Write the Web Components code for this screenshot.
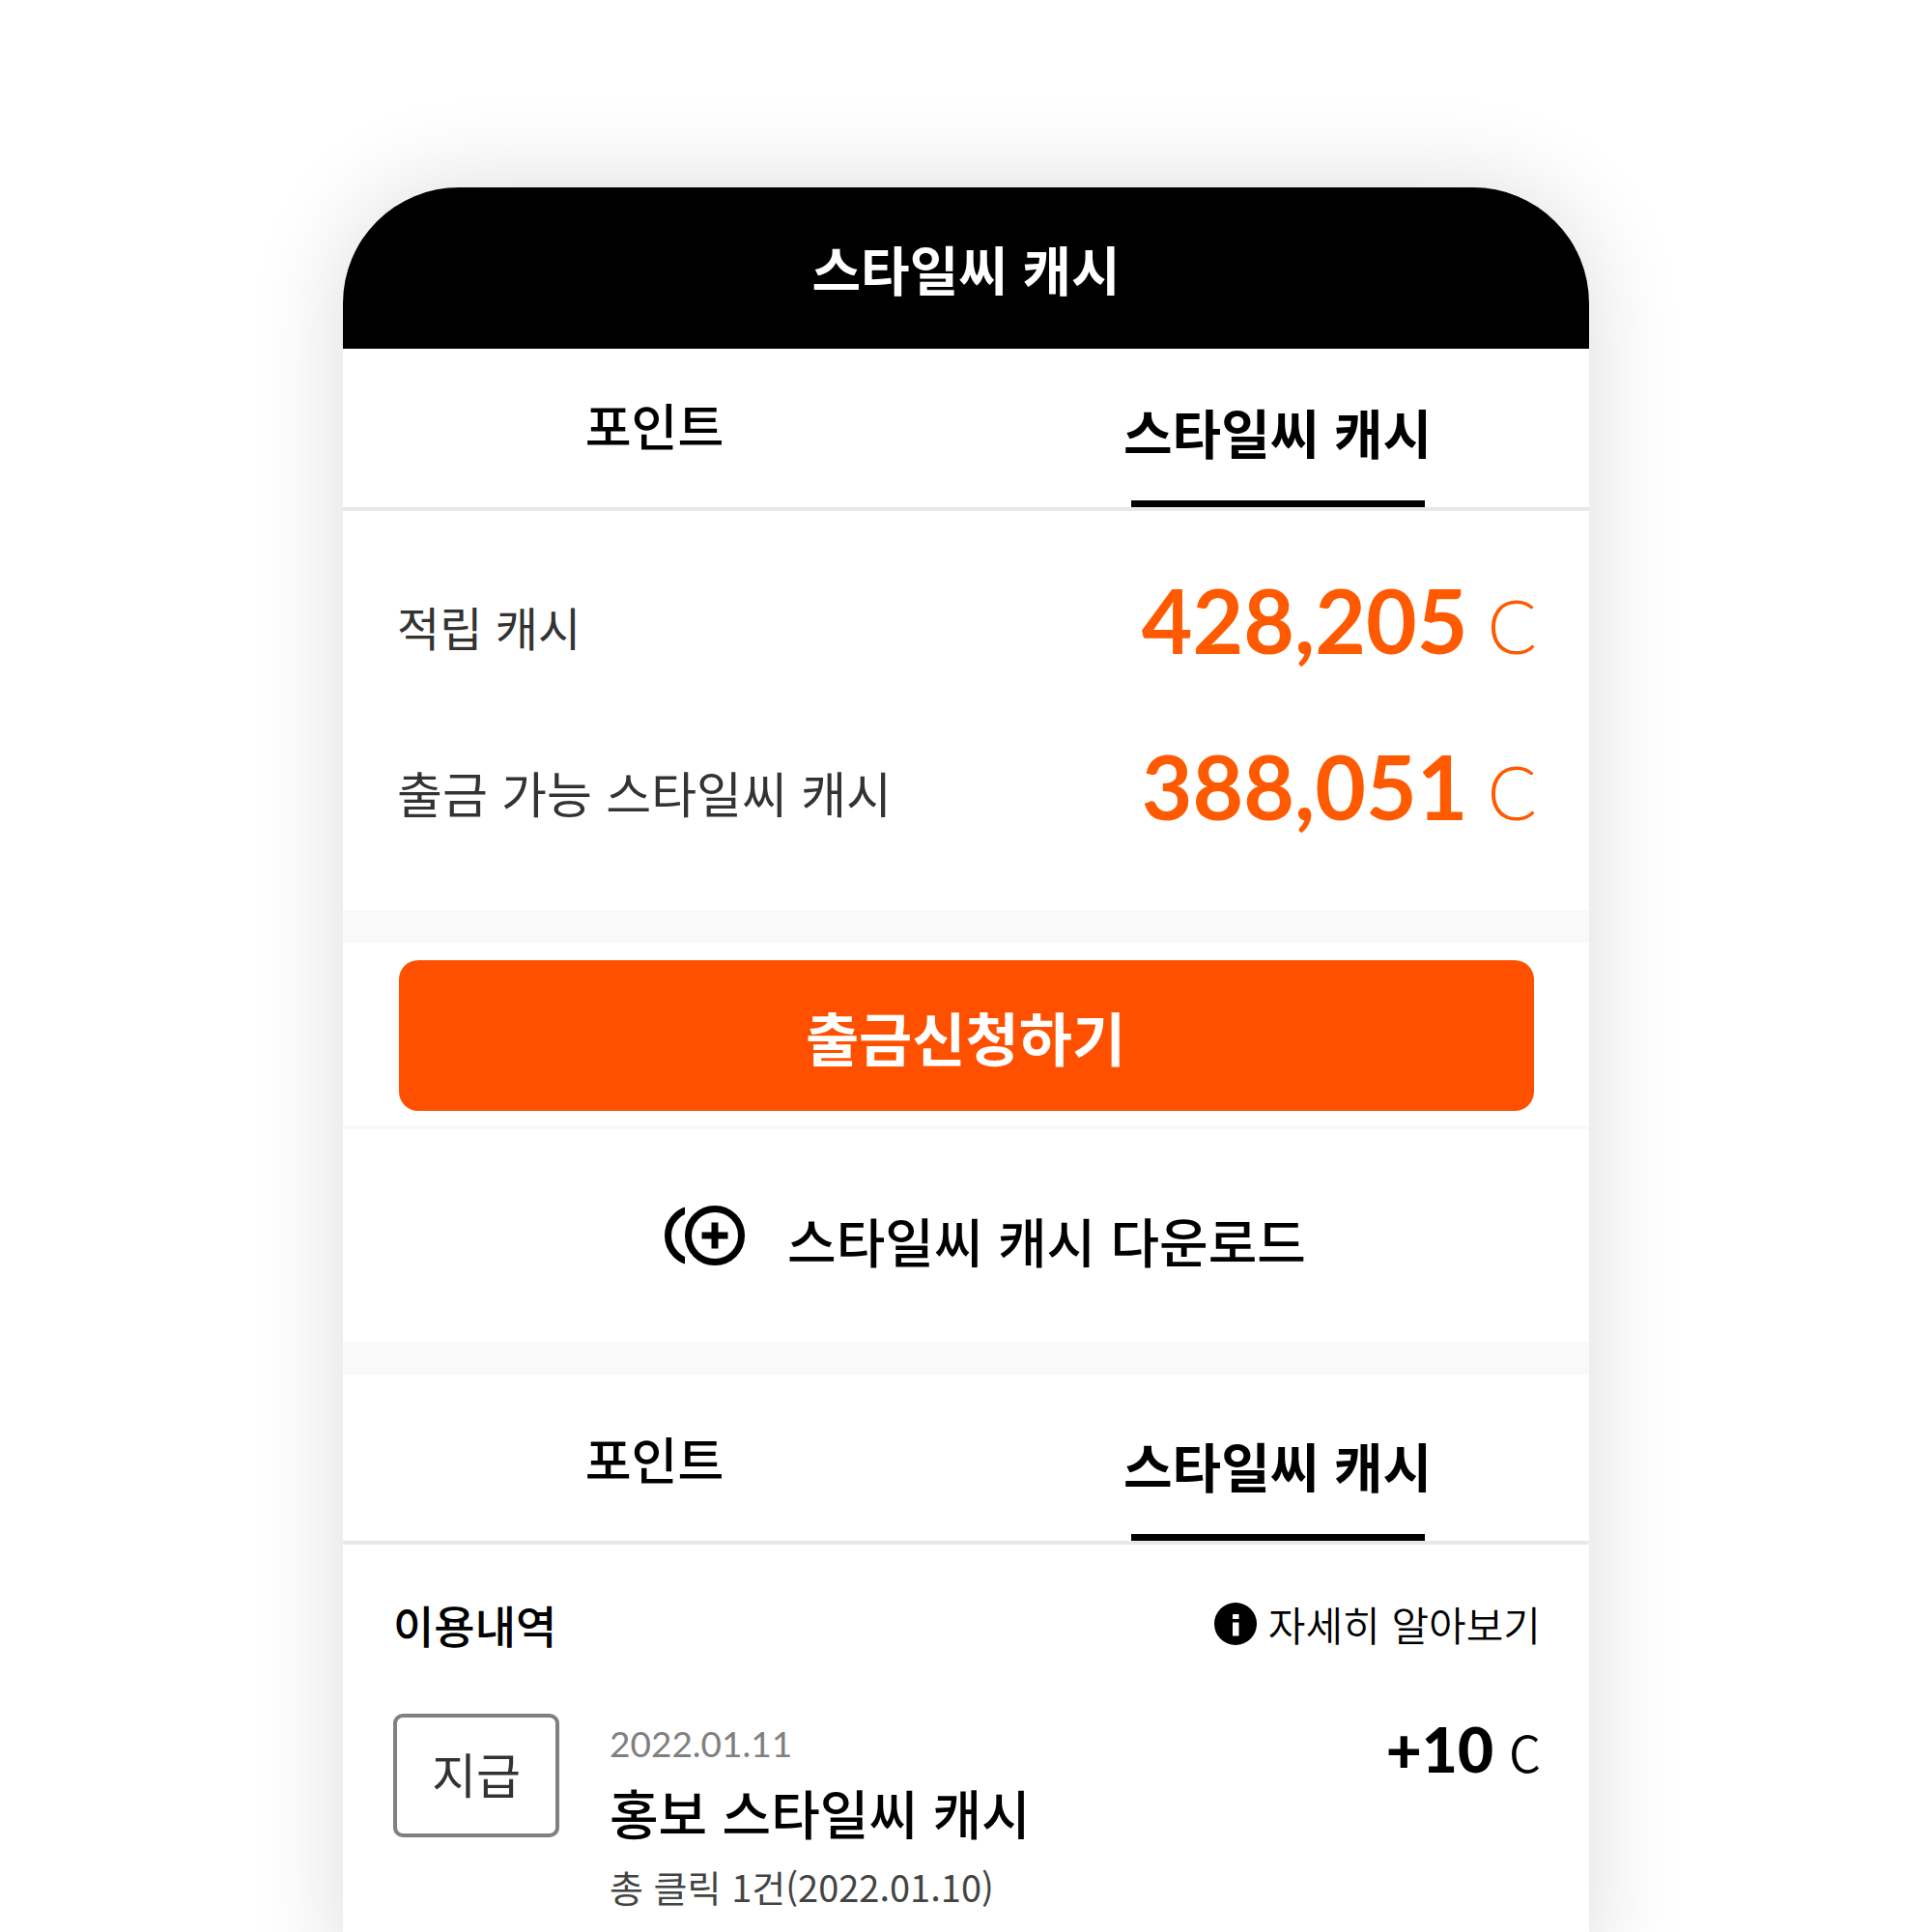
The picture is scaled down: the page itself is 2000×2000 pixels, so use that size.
<!DOCTYPE html>
<html lang="ko">
<head>
<meta charset="utf-8">
<meta name="viewport" content="width=device-width, initial-scale=1">
<title>스타일씨 캐시</title>
<style>
  body {
    margin: 0;
    background: #fff;
    color: #000;
    font-family: "Noto Sans CJK KR", "Noto Sans", sans-serif;
  }
</style>
</head>
<body>
<cash-page>
  <cash-header>스타일씨 캐시</cash-header>
  <cash-tabs></cash-tabs>
  <cash-balances>
    <cash-balance amount="428,205"><span>적립 캐시</span></cash-balance>
    <cash-balance amount="388,051" wide><span>출금 가능 스타일씨 캐시</span></cash-balance>
  </cash-balances>
  <cash-withdraw>출금신청하기</cash-withdraw>
  <cash-download>스타일씨 캐시 다운로드</cash-download>
  <cash-tabs spaced></cash-tabs>
  <cash-history>
    <cash-entry>
      <span slot="kind">지급</span>
      <time slot="date" datetime="2022-01-11">2022.01.11</time>
      <span slot="title">홍보 스타일씨 캐시</span>
      <span slot="note">총 클릭 1건(2022.01.10)</span>
      <span slot="amount">+10</span>
    </cash-entry>
  </cash-history>
</cash-page>

<script>
  const define = (name, html, setup) => {
    const template = document.createElement("template");
    template.innerHTML = html;
    customElements.define(name, class extends HTMLElement {
      constructor() {
        super();
        this.attachShadow({ mode: "open" }).append(template.content.cloneNode(true));
      }
      connectedCallback() {
        if (setup) setup(this, this.shadowRoot);
      }
    });
  };

  define("cash-page", `
    <style>
      :host { display: block; box-sizing: border-box; height: 100vh; min-height: 100vh; padding-top: 194px; overflow: hidden; }
      main {
        width: 64.5%;
        margin: 0 auto;
        padding-bottom: 52px;
        background: #fff;
        border-radius: 120px 120px 0 0;
        box-shadow: 0 0 100px rgba(0, 0, 0, .14);
      }
    </style>
    <main><slot></slot></main>`);

  define("cash-header", `
    <style>
      :host { display: block; background: #000; color: #fff; border-radius: 120px 120px 0 0; }
      h1 { margin: 0; font-size: 55px; line-height: 167px; font-weight: 700; text-align: center; }
    </style>
    <h1><slot></slot></h1>`);

  define("cash-tabs", `
    <style>
      :host { display: block; border-bottom: 4px solid #e8e8e8; }
      :host([spaced]) { padding-top: 8px; }
      div { display: grid; grid-template-columns: 1fr 1fr; }
      button {
        position: relative;
        height: 164px;
        padding: 0 0 6px;
        border: 0;
        background: none;
        color: #000;
        font: 500 52px/76px "Noto Sans CJK KR", sans-serif;
      }
      button[aria-selected="true"] { padding: 6px 0 0; font-size: 55px; font-weight: 700; }
      button[aria-selected="true"]::after {
        content: "";
        position: absolute;
        bottom: 0;
        left: 50%;
        width: 304px;
        height: 7px;
        margin-left: -152px;
        background: #000;
      }
    </style>
    <div role="tablist">
      <button type="button" role="tab" aria-selected="false">포인트</button>
      <button type="button" role="tab" aria-selected="true">스타일씨 캐시</button>
    </div>`);

  define("cash-balances", `
    <style>
      :host { display: block; padding: 33px 54px 36px 56px; border-bottom: 34px solid #f9f9f9; }
    </style>
    <slot></slot>`);

  define("cash-balance", `
    <style>
      :host { display: flex; justify-content: space-between; align-items: center; height: 172px; color: #333; font-size: 48px; line-height: 76px; }
      :host([wide]) { font-size: 51px; }
      p { display: flex; align-items: baseline; gap: 20px; margin: 0; padding-bottom: 6px; color: #ff5a00; font-family: Lato, sans-serif; line-height: 108px; }
      b { font-size: 91px; font-weight: 700; }
      i { font-size: 76px; font-weight: 300; font-style: normal; }
    </style>
    <slot></slot>
    <p><b></b><i>C</i></p>`,
    (host, root) => { root.querySelector("b").textContent = host.getAttribute("amount"); });

  define("cash-withdraw", `
    <style>
      :host { display: block; padding: 18px 57px 15px 58px; border-bottom: 4px solid #f9f9f9; }
      button {
        display: block;
        width: 100%;
        height: 156px;
        padding: 2px 2px 0 0;
        border: 0;
        border-radius: 20px;
        background: #ff5000;
        color: #fff;
        font: 700 60px/88px "Noto Sans CJK KR", sans-serif;
      }
    </style>
    <button type="button"><slot></slot></button>`);

  define("cash-download", `
    <style>
      :host { display: block; border-bottom: 34px solid #f9f9f9; }
      a {
        display: flex;
        justify-content: center;
        align-items: center;
        gap: 44px;
        height: 220px;
        padding-left: 40px;
        color: #000;
        font-size: 55px;
        line-height: 76px;
        font-weight: 500;
        text-decoration: none;
      }
      svg { width: 83px; height: 62px; }
      span { padding-top: 8px; }
    </style>
    <a href="#download">
      <svg viewBox="0 0 83 62" fill="none" stroke="#000" stroke-width="7" aria-hidden="true">
        <clipPath id="edge"><rect width="21" height="62"/></clipPath>
        <circle cx="31" cy="31" r="27.5" clip-path="url(#edge)"/>
        <circle cx="52" cy="31" r="27.5"/>
        <path d="M38.5 31h27M52 17.5v27"/>
      </svg>
      <span><slot></slot></span>
    </a>`);

  define("cash-history", `
    <style>
      :host { display: block; padding: 50px 50px 0 52px; }
      header { display: flex; justify-content: space-between; align-items: center; height: 64px; margin-bottom: 61px; }
      h2 { margin: 0; font-size: 46px; line-height: 64px; font-weight: 500; }
      a { display: flex; align-items: center; gap: 12px; color: #000; font-size: 42px; line-height: 60px; font-weight: 350; text-decoration: none; }
      svg { width: 44px; height: 44px; }
    </style>
    <header>
      <h2>이용내역</h2>
      <a href="#info">
        <svg viewBox="0 0 44 44" aria-hidden="true">
          <circle cx="22" cy="22" r="22"/>
          <path d="M19 12h6.500v5H19zM19 20.500h6.500v14H19z" fill="#fff"/>
        </svg>
        자세히 알아보기
      </a>
    </header>
    <slot></slot>`);

  define("cash-entry", `
    <style>
      :host { display: flex; align-items: flex-start; gap: 52px; }
      .kind {
        box-sizing: border-box;
        width: 172px;
        height: 128px;
        border: 4px solid #808080;
        border-radius: 10px;
        color: #333;
        font-size: 50px;
        line-height: 114px;
        text-align: center;
      }
      .text { display: flex; flex-direction: column; flex: 1; }
      .date { color: #808080; font: 400 37px/62px Lato, sans-serif; }
      .title { font-size: 55px; line-height: 78px; font-weight: 500; }
      .note { color: #444; font-size: 38px; line-height: 78px; }
      .amount { display: flex; align-items: baseline; gap: 16px; line-height: 72px; }
      b { font: 900 64px/74px Lato, sans-serif; }
      .unit { font-size: 52px; font-weight: 350; }
    </style>
    <div class="kind"><slot name="kind"></slot></div>
    <div class="text">
      <div class="date"><slot name="date"></slot></div>
      <div class="title"><slot name="title"></slot></div>
      <div class="note"><slot name="note"></slot></div>
    </div>
    <div class="amount"><b><slot name="amount"></slot></b><span class="unit">C</span></div>`);
</script>
</body>
</html>
